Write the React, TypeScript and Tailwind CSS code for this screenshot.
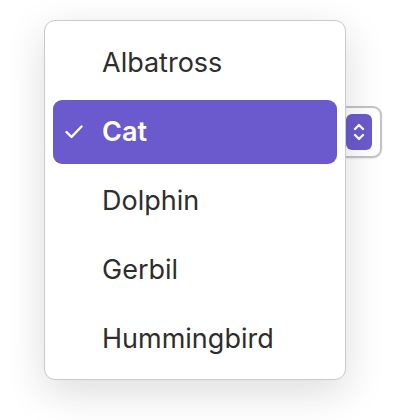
import React from "react";

const items = ["Albatross", "Cat", "Dolphin", "Gerbil", "Hummingbird"];

export default function App() {
  return (
    <div
      className="relative w-[410px] h-[420px] bg-white overflow-hidden"
      style={{ fontFamily: "Inter, 'Liberation Sans', sans-serif" }}
    >
      {/* trigger button underneath */}
      <div className="absolute left-[150px] top-[106px] w-[232px] h-[52px] rounded-[9px] border-2 border-[#c4c4c4] bg-white flex items-center justify-end pr-[8px] shadow-[0_1px_2px_rgba(0,0,0,0.08)]">
        <div className="w-[26px] h-[36px] rounded-[6px] bg-[#6b5acd] flex items-center justify-center">
          <svg width="14" height="22" viewBox="0 0 14 22" fill="none" stroke="white" strokeWidth="2.4" strokeLinecap="round" strokeLinejoin="round">
            <path d="M3 8 L7 4 L11 8" />
            <path d="M3 14 L7 18 L11 14" />
          </svg>
        </div>
      </div>

      {/* popup */}
      <div className="absolute left-[44px] top-[20px] w-[302px] h-[360px] rounded-[11px] border-[1.5px] border-[#c9c9c9] bg-white shadow-[0_12px_40px_rgba(0,0,0,0.14)] px-[8px] pt-[10px] pb-[8px] flex flex-col gap-[5px]">
        {items.map((it) => {
          const sel = it === "Cat";
          return (
            <div
              key={it}
              className={
                sel
                  ? "h-[64px] rounded-[9px] bg-[#6b5acd] flex items-center text-white font-semibold text-[27px]"
                  : "h-[64px] rounded-[9px] flex items-center text-[#2e2e2e] text-[27px]"
              }
            >
              <div className="w-[49px] flex justify-end pr-[19px]">
                {sel && (
                  <svg width="18" height="14" viewBox="0 0 18 14" fill="none" stroke="white" strokeWidth="2.4" strokeLinecap="round" strokeLinejoin="round">
                    <path d="M1.5 7 L6.5 12 L16.5 1.5" />
                  </svg>
                )}
              </div>
              <span>{it}</span>
            </div>
          );
        })}
      </div>
    </div>
  );
}
